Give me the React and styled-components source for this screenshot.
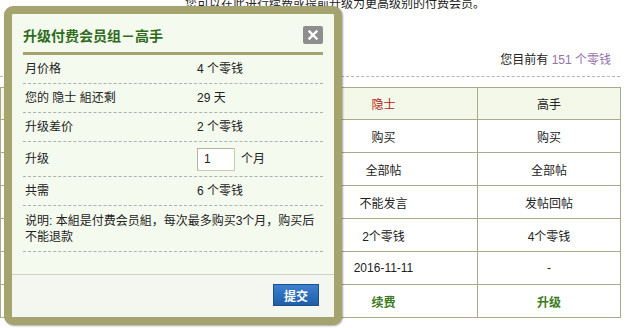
import React from "react";
import styled, { createGlobalStyle } from "styled-components";

const Global = createGlobalStyle`
  html, body { margin: 0; padding: 0; background: #fff; }
  body {
    font-family: "Liberation Sans", "Noto Sans CJK SC", sans-serif;
    font-size: 12px;
    color: #222;
    overflow: hidden;
  }
`;

const Page = styled.div`
  position: relative;
  width: 632px;
  height: 328px;
  overflow: hidden;
  padding-right: 12px;
  box-sizing: border-box;
`;

const TopNote = styled.div`
  margin-top: -3px;
  line-height: 15px;
  padding-left: 185px;
  white-space: nowrap;
  color: #222;
`;

const Balance = styled.div`
  margin-top: 40px;
  line-height: 16px;
  text-align: right;
  padding: 0 9px 8px 0;
  border-bottom: 1px dashed #b4b4b4;
  color: #222;
`;

const Coins = styled.span`
  color: #9272aa;
`;

const Table = styled.table`
  margin-top: 10px;
  width: 620px;
  border-collapse: collapse;
  table-layout: fixed;
  td {
    border: 1px solid #aaa98a;
    text-align: center;
    padding: 0;
    height: 32px;
    color: #222;
  }
`;

const HeadRow = styled.tr`
  background: #f4f8e8;
  td { height: 31px; }
`;

const Cell = styled.td`
  color: ${(p) => p.$color || "#222"} !important;
  font-weight: ${(p) => (p.$bold ? "bold" : "normal")};
`;

const Modal = styled.div`
  position: absolute;
  left: 4px;
  top: 6px;
  width: 338px;
  height: 319px;
  box-sizing: border-box;
  border: 8px solid #a5a36e;
  border-radius: 9px;
  background: #f5faef;
  box-shadow: 1px 1px 2px rgba(0, 0, 0, 0.35);
  display: flex;
  flex-direction: column;
`;

const Header = styled.div`
  margin: 0 11px;
  height: 35px;
  padding-top: 3px;
  border-bottom: 3px solid #a5a36e;
  display: flex;
  align-items: center;
  justify-content: space-between;
`;

const Title = styled.h3`
  margin: 0;
  font-size: 14px;
  font-weight: bold;
  color: #2e6b1c;
`;

const Close = styled.button`
  width: 20px;
  height: 18px;
  border: none;
  padding: 0;
  border-radius: 2px;
  background: #8e8e8e;
  display: flex;
  align-items: center;
  justify-content: center;
  cursor: pointer;
`;

const Body = styled.div`
  margin: 0 11px;
`;

const Row = styled.div`
  display: grid;
  grid-template-columns: 172px 1fr;
  align-items: center;
  height: ${(p) => p.$h || 28}px;
  padding-left: 2px;
  border-bottom: 1px dashed #b0b0b0;
  line-height: 16px;
`;

const Note = styled.div`
  padding: 7px 0 6px 2px;
  line-height: 16px;
  border-bottom: 1px dashed #b0b0b0;
`;

const Value = styled.div`
  display: flex;
  align-items: center;
  gap: 6px;
`;

const NumInput = styled.input`
  width: 38px;
  height: 23px;
  box-sizing: border-box;
  border: 1px solid #c9c8b2;
  border-top-color: #b5b49c;
  border-left-color: #b5b49c;
  background: #fff;
  padding: 0 0 0 6px;
  font-family: inherit;
  font-size: 12px;
  color: #222;
  outline: none;
`;

const Spacer = styled.div`
  flex: 1;
`;

const Footer = styled.div`
  height: 43px;
  border-top: 1px solid #cfd0c6;
  background: #f3f7ef;
  display: flex;
  justify-content: flex-end;
  align-items: flex-start;
  padding: 9px 15px 0 0;
  box-sizing: border-box;
`;

const Submit = styled.button`
  width: 46px;
  height: 22px;
  border: 1px solid #1c4f8e;
  background: linear-gradient(#3d80d0, #1f5ea8);
  color: #fff;
  font-family: inherit;
  font-size: 12px;
  font-weight: bold;
  padding: 0;
  cursor: pointer;
`;

export default function App() {
  return (
    <>
      <Global />
      <Page>
        <TopNote>您可以在此进行续费或提前升级为更高级别的付费会员。</TopNote>
        <Balance>
          您目前有 <Coins>151 个零钱</Coins>
        </Balance>
        <Table>
          <colgroup>
            <col style={{ width: 289 }} />
            <col style={{ width: 188 }} />
            <col style={{ width: 143 }} />
          </colgroup>
          <tbody>
            <HeadRow>
              <Cell />
              <Cell $color="#b02222">隐士</Cell>
              <Cell>高手</Cell>
            </HeadRow>
            <tr>
              <Cell />
              <Cell>购买</Cell>
              <Cell>购买</Cell>
            </tr>
            <tr>
              <Cell />
              <Cell>全部帖</Cell>
              <Cell>全部帖</Cell>
            </tr>
            <tr>
              <Cell />
              <Cell>不能发言</Cell>
              <Cell>发帖回帖</Cell>
            </tr>
            <tr>
              <Cell />
              <Cell>2个零钱</Cell>
              <Cell>4个零钱</Cell>
            </tr>
            <tr>
              <Cell />
              <Cell>2016-11-11</Cell>
              <Cell>-</Cell>
            </tr>
            <tr>
              <Cell />
              <Cell $color="#3a7a1c" $bold>
                续费
              </Cell>
              <Cell $color="#3a7a1c" $bold>
                升级
              </Cell>
            </tr>
          </tbody>
        </Table>

        <Modal>
          <Header>
            <Title>升级付费会员组－高手</Title>
            <Close aria-label="关闭">
              <svg width="10" height="10" viewBox="0 0 10 10">
                <path
                  d="M1.5 1.5 L8.5 8.5 M8.5 1.5 L1.5 8.5"
                  stroke="#fff"
                  strokeWidth="2.4"
                  strokeLinecap="square"
                />
              </svg>
            </Close>
          </Header>
          <Body>
            <Row>
              <span>月价格</span>
              <Value>4 个零钱</Value>
            </Row>
            <Row>
              <span>您的 隐士 組还剩</span>
              <Value>29 天</Value>
            </Row>
            <Row>
              <span>升级差价</span>
              <Value>2 个零钱</Value>
            </Row>
            <Row $h={34}>
              <span>升级</span>
              <Value>
                <NumInput defaultValue="1" />
                个月
              </Value>
            </Row>
            <Row>
              <span>共需</span>
              <Value>6 个零钱</Value>
            </Row>
            <Note>
              说明: 本組是付费会员組，每次最多购买3个月，购买后
              <br />
              不能退款
            </Note>
          </Body>
          <Spacer />
          <Footer>
            <Submit>提交</Submit>
          </Footer>
        </Modal>
      </Page>
    </>
  );
}
